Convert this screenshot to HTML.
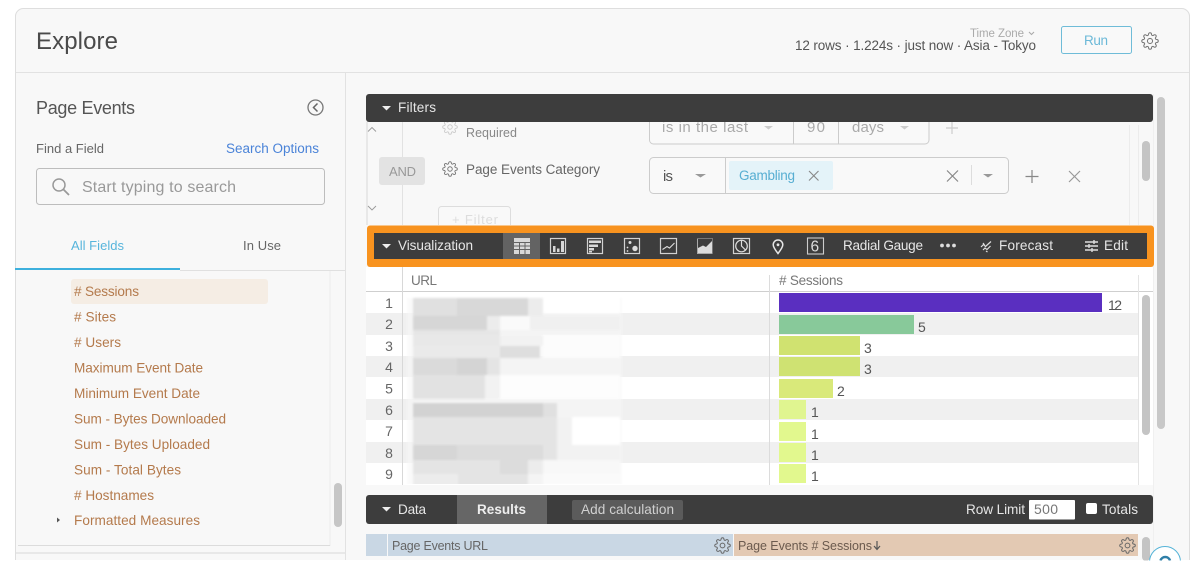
<!DOCTYPE html>
<html><head><meta charset="utf-8"><title>Explore</title>
<style>
html,body{margin:0;padding:0;background:#fff;width:1200px;height:581px;overflow:hidden}
svg{display:block;filter:blur(.35px)}
text{font-family:"Liberation Sans",sans-serif;white-space:pre}
.f text{fill:#b47a4c;font-size:13.6px}
.w{fill:#e6e6e6;font-size:13.6px}
.n{fill:#666;font-size:14px;text-anchor:middle}
.v{fill:#555;font-size:14px}
.ic{fill:none;stroke:#d2d2d2;stroke-width:1.2}
</style></head><body>
<svg width="1200" height="581" viewBox="0 0 1200 581" xmlns="http://www.w3.org/2000/svg">
<defs>
<symbol id="gear" viewBox="0 0 24 24"><circle cx="12" cy="12" r="3.4" fill="none" stroke="currentColor" stroke-width="1.400"/><path fill="none" stroke="currentColor" stroke-width="1.400" d="M19.4 15a1.65 1.65 0 0 0 .33 1.82l.06.06a2 2 0 0 1 0 2.83 2 2 0 0 1-2.83 0l-.06-.06a1.65 1.65 0 0 0-1.82-.33 1.65 1.65 0 0 0-1 1.51V21a2 2 0 0 1-2 2 2 2 0 0 1-2-2v-.09A1.65 1.65 0 0 0 9 19.4a1.65 1.65 0 0 0-1.82.33l-.06.06a2 2 0 0 1-2.83 0 2 2 0 0 1 0-2.83l.06-.06a1.65 1.65 0 0 0 .33-1.82 1.65 1.65 0 0 0-1.51-1H3a2 2 0 0 1-2-2 2 2 0 0 1 2-2h.09A1.65 1.65 0 0 0 4.6 9a1.65 1.65 0 0 0-.33-1.82l-.06-.06a2 2 0 0 1 0-2.83 2 2 0 0 1 2.83 0l.06.06a1.65 1.65 0 0 0 1.82.33H9a1.65 1.65 0 0 0 1-1.51V3a2 2 0 0 1 2-2 2 2 0 0 1 2 2v.09a1.65 1.65 0 0 0 1 1.51 1.65 1.65 0 0 0 1.82-.33l.06-.06a2 2 0 0 1 2.83 0 2 2 0 0 1 0 2.83l-.06.06a1.65 1.65 0 0 0-.33 1.82V9a1.65 1.65 0 0 0 1.51 1H21a2 2 0 0 1 2 2 2 2 0 0 1-2 2h-.09a1.65 1.65 0 0 0-1.51 1z"/></symbol>
<filter id="b" x="-5%" y="-5%" width="110%" height="110%"><feGaussianBlur stdDeviation="1"/></filter>
<clipPath id="frame"><path d="M15 560V17a8 8 0 0 1 8-8H1182a8 8 0 0 1 8 8V560z"/></clipPath>
<clipPath id="fclip"><rect x="366" y="122" width="790" height="103"/></clipPath>
<clipPath id="tclip"><rect x="366" y="292" width="772" height="192"/></clipPath>
</defs>

<!-- frame -->
<g clip-path="url(#frame)">
<rect x="15" y="8" width="1175" height="553" fill="#f8f8f8"/>
<rect x="15" y="72" width="1175" height="1" fill="#e2e2e2"/>
<rect x="345" y="73" width="1" height="488" fill="#e2e2e2"/>
<rect x="1189" y="8" width="1" height="553" fill="#dedede"/>
<rect x="15" y="8" width="1" height="553" fill="#dedede"/>
</g>
<path d="M15.5 560V17a8 8 0 0 1 8-8.500H1181.500a8 8 0 0 1 8 8.500V560" fill="none" stroke="#dedede"/>

<!-- header -->
<text x="36" y="49" font-size="24" fill="#4a4a4a" textLength="82">Explore</text>
<text x="970" y="37" font-size="11.500" fill="#aaa" textLength="54">Time Zone</text>
<path d="M1029 32l2.500 2.500 2.500-2.500" fill="none" stroke="#aaa" stroke-width="1.100"/>
<text x="795" y="50" font-size="13.500" fill="#555" textLength="241">12 rows · 1.224s · just now · Asia - Tokyo</text>
<rect x="1061.500" y="26.500" width="70" height="27" rx="2" fill="#f9f9f9" stroke="#6fbcd8"/>
<text x="1084" y="45" font-size="13.500" fill="#6cb9d8" textLength="24">Run</text>
<use href="#gear" x="1141" y="32" width="18" height="18" color="#777"/>

<!-- left panel -->
<text x="36" y="114" font-size="18" fill="#555" textLength="99">Page Events</text>
<circle cx="315.500" cy="107.500" r="7.500" fill="none" stroke="#777" stroke-width="1.300"/>
<path d="M317.500 103.500l-4 4 4 4" fill="none" stroke="#666" stroke-width="1.500"/>
<text x="36" y="153" font-size="13" fill="#666" textLength="68">Find a Field</text>
<text x="226" y="153" font-size="13.500" fill="#4a83d8" textLength="93">Search Options</text>
<rect x="36.500" y="168.500" width="288" height="36" rx="3" fill="#f8f8f8" stroke="#bdbdbd"/>
<circle cx="59" cy="185" r="6" fill="none" stroke="#999" stroke-width="1.500"/>
<path d="M63.500 189.500l5.500 5.500" stroke="#999" stroke-width="1.800"/>
<text x="82" y="192" font-size="16" fill="#999" textLength="154">Start typing to search</text>
<text x="71" y="250" font-size="13" fill="#57b5dc" textLength="53">All Fields</text>
<text x="243" y="250" font-size="13" fill="#666" textLength="38">In Use</text>
<rect x="180" y="270" width="165" height="1" fill="#e0e0e0"/>
<rect x="15" y="268" width="165" height="2" fill="#3db0dd"/>
<rect x="329.500" y="271" width="1" height="275" fill="#ececec"/>
<rect x="71" y="279" width="197" height="25" rx="3" fill="#f5ede4"/>
<g class="f">
<text x="74" y="296" textLength="65">&#35; Sessions</text>
<text x="74" y="321.500" textLength="42">&#35; Sites</text>
<text x="74" y="347" textLength="47">&#35; Users</text>
<text x="74" y="372.500" textLength="129">Maximum Event Date</text>
<text x="74" y="398" textLength="126">Minimum Event Date</text>
<text x="74" y="423.500" textLength="152">Sum - Bytes Downloaded</text>
<text x="74" y="449" textLength="136">Sum - Bytes Uploaded</text>
<text x="74" y="474.500" textLength="107">Sum - Total Bytes</text>
<text x="74" y="500" textLength="80">&#35; Hostnames</text>
<text x="74" y="525" textLength="126">Formatted Measures</text>
</g>
<path d="M57 517.500v5l3-2.500z" fill="#555"/>
<rect x="334" y="483" width="8" height="44" rx="4" fill="#c6c6c6"/>
<rect x="18" y="545" width="312" height="1" fill="#dcdcdc"/>
<rect x="16" y="552" width="329" height="2" fill="#e8e8e8"/>

<!-- filters body -->
<g clip-path="url(#fclip)">
<rect x="366.500" y="122" width="1" height="103" fill="#d8d8d8"/>
<rect x="402" y="122" width="1" height="35" fill="#e2e2e2"/>
<rect x="402" y="185" width="1" height="40" fill="#e2e2e2"/>
<path d="M368 131.500l4-4 4 4M368 206l4 4 4-4" fill="none" stroke="#999" stroke-width=".9"/>
<rect x="379" y="157" width="46" height="28" rx="3" fill="#e3e3e3"/>
<text x="389" y="176" font-size="13" fill="#999" textLength="27">AND</text>
<use href="#gear" x="442" y="119" width="16" height="16" color="#ccc"/>
<text x="466" y="137" font-size="12.500" fill="#888" textLength="51">Required</text>
<use href="#gear" x="442" y="161" width="16" height="16" color="#777"/>
<text x="466" y="174" font-size="13.500" fill="#666" textLength="134">Page Events Category</text>
<path d="M649.500 120v20a4 4 0 0 0 4 4H925a4 4 0 0 0 4-4v-20" fill="#f9f9f9" stroke="#ccc"/>
<rect x="793" y="122" width="1" height="22" fill="#ccc"/><rect x="838" y="122" width="1" height="22" fill="#ccc"/>
<text x="662" y="132" font-size="15" fill="#aaa" textLength="86">is in the last</text>
<path d="M764 126h9l-4.500 3.500z M900 126h9l-4.500 3.500z" fill="#ccc"/>
<text x="807" y="132" font-size="15" fill="#aaa" textLength="18">90</text>
<text x="852" y="132" font-size="15" fill="#aaa" textLength="32">days</text>
<path d="M952 122v12M946 128h12" stroke="#ccc" stroke-width="1.200"/>
<rect x="649.500" y="157.500" width="359" height="36" rx="4" fill="#f9f9f9" stroke="#ccc"/>
<rect x="725" y="158" width="1" height="35" fill="#ccc"/>
<text x="663" y="181" font-size="15" fill="#555" textLength="10">is</text>
<path d="M695 174h11l-5.500 3.500z" fill="#999"/>
<rect x="729" y="161" width="104" height="29" rx="2" fill="#e4f3f9"/>
<text x="739" y="180" font-size="13.500" fill="#57aed2" textLength="56">Gambling</text>
<path d="M809 171l9.500 9.500M818.500 171L809 180.500" stroke="#888" stroke-width="1.100"/>
<path d="M947 170.500l11 11M958 170.500l-11 11" stroke="#888" stroke-width="1.200"/>
<rect x="971" y="165" width="1" height="20" fill="#ddd"/>
<path d="M983 174h10l-5 3.500z" fill="#999"/>
<path d="M1032 170v13M1025.500 176.500h13" stroke="#888" stroke-width="1.200"/>
<path d="M1069 171l11 11M1080 171l-11 11" stroke="#999" stroke-width="1.200"/>
<rect x="438.500" y="206.500" width="72" height="30" rx="3" fill="#f9f9f9" stroke="#ddd"/>
<text x="452" y="224" font-size="13" fill="#ddd" textLength="46">+ Filter</text>
<rect x="1129" y="125" width="1" height="100" fill="#ececec"/>
<rect x="1138" y="125" width="1" height="100" fill="#ececec"/>
<rect x="1142" y="141" width="8" height="40" rx="4" fill="#c4c4c4"/>
</g>
<!-- outer scrollbar -->
<rect x="1153" y="94" width="1" height="467" fill="#f0f0f0"/>
<rect x="1157" y="97" width="8" height="332" rx="4" fill="#c8c8c8"/>

<!-- filters bar -->
<rect x="366" y="94" width="787" height="28" rx="3" fill="#3d3d3d"/>
<path d="M382 106h9l-4.500 4.500z" fill="#eee"/>
<text class="w" x="398" y="112" textLength="38">Filters</text>

<!-- table -->
<rect x="366" y="267" width="787" height="218" fill="#fff"/>
<rect x="366" y="291" width="787" height="1" fill="#cfcfcf"/>
<rect x="366" y="313" width="772" height="22" fill="#f0f0f0"/>
<rect x="366" y="356" width="772" height="21" fill="#f0f0f0"/>
<rect x="366" y="399" width="772" height="21" fill="#f0f0f0"/>
<rect x="366" y="442" width="772" height="21" fill="#f0f0f0"/>
<g clip-path="url(#tclip)"><g filter="url(#b)">
<rect x="407" y="298" width="215" height="187" fill="#f6f6f6" opacity=".6"/>
<rect x="413" y="298" width="44" height="18" fill="#e0e0e0"/><rect x="457" y="298" width="71" height="18" fill="#d8d8d8"/><rect x="528" y="298" width="15" height="18" fill="#ececec"/><rect x="543" y="298" width="77" height="15" fill="#fff"/>
<rect x="413" y="316" width="74" height="14" fill="#d6d6d6"/><rect x="487" y="316" width="13" height="14" fill="#ececec"/><rect x="500" y="316" width="30" height="14" fill="#fafafa"/><rect x="530" y="316" width="90" height="14" fill="#f0f0f0"/>
<rect x="413" y="335" width="87" height="11" fill="#e8e8e8"/><rect x="413" y="330" width="87" height="5" fill="#e6e6e6"/><rect x="500" y="335" width="43" height="11" fill="#f2f2f2"/><rect x="543" y="335" width="77" height="23" fill="#fcfcfc"/>
<rect x="413" y="346" width="87" height="12" fill="#eaeaea"/><rect x="500" y="346" width="40" height="12" fill="#dedede"/>
<rect x="413" y="358" width="44" height="17" fill="#dadada"/><rect x="457" y="358" width="30" height="17" fill="#d4d4d4"/><rect x="487" y="358" width="13" height="17" fill="#e4e4e4"/><rect x="500" y="358" width="120" height="17" fill="#f4f4f4"/>
<rect x="413" y="375" width="72" height="24" fill="#e2e2e2"/><rect x="485" y="375" width="15" height="24" fill="#f2f2f2"/><rect x="500" y="375" width="120" height="24" fill="#fdfdfd"/>
<rect x="413" y="403" width="130" height="14" fill="#d2d2d2"/><rect x="543" y="403" width="14" height="14" fill="#e0e0e0"/>
<rect x="413" y="417" width="144" height="28" fill="#e4e4e4"/><rect x="557" y="417" width="15" height="28" fill="#f2f2f2"/><rect x="572" y="417" width="48" height="28" fill="#fff"/>
<rect x="413" y="445" width="44" height="15" fill="#d6d6d6"/><rect x="457" y="445" width="86" height="15" fill="#dcdcdc"/><rect x="543" y="445" width="14" height="15" fill="#e4e4e4"/><rect x="557" y="445" width="63" height="15" fill="#f2f2f2"/>
<rect x="413" y="460" width="87" height="14" fill="#e4e4e4"/><rect x="500" y="460" width="28" height="14" fill="#dcdcdc"/><rect x="528" y="460" width="15" height="14" fill="#ececec"/><rect x="543" y="460" width="77" height="14" fill="#f8f8f8"/>
<rect x="413" y="474" width="45" height="12" fill="#ececec"/><rect x="458" y="474" width="70" height="12" fill="#e4e4e4"/><rect x="528" y="474" width="15" height="12" fill="#f4f4f4"/>
</g></g>
<rect x="402" y="267" width="1" height="218" fill="#d8d8d8"/>
<rect x="769" y="275" width="1" height="210" fill="#dcdcdc"/>
<rect x="1138" y="275" width="1" height="210" fill="#e4e4e4"/>
<text x="411" y="285" font-size="13.500" fill="#777" textLength="26">URL</text>
<text x="779" y="285" font-size="13.500" fill="#777" textLength="64">&#35; Sessions</text>
<text class="n" x="389" y="308">1</text><text class="n" x="389" y="329">2</text><text class="n" x="389" y="351">3</text><text class="n" x="389" y="372">4</text><text class="n" x="389" y="393.500">5</text><text class="n" x="389" y="415">6</text><text class="n" x="389" y="436">7</text><text class="n" x="389" y="458">8</text><text class="n" x="389" y="479">9</text>
<rect x="779" y="293" width="323" height="19" fill="#5a2fc0"/>
<rect x="779" y="315" width="135" height="19" fill="#88c99a"/>
<rect x="779" y="336" width="81" height="19" fill="#d0e270"/>
<rect x="779" y="357" width="81" height="19" fill="#cfe272"/>
<rect x="779" y="379" width="54" height="19" fill="#d9e97a"/>
<rect x="779" y="400" width="27" height="19" fill="#e0f590"/>
<rect x="779" y="422" width="27" height="19" fill="#e2f88e"/>
<rect x="779" y="443" width="27" height="19" fill="#e2f88e"/>
<rect x="779" y="464" width="27" height="19" fill="#e2f88e"/>
<text class="v" x="1108" y="310" textLength="14">12</text>
<text class="v" x="918" y="332">5</text><text class="v" x="864" y="353">3</text><text class="v" x="864" y="374">3</text><text class="v" x="837" y="396">2</text>
<text class="v" x="811" y="417">1</text><text class="v" x="811" y="439">1</text><text class="v" x="811" y="460">1</text><text class="v" x="811" y="481">1</text>
<rect x="1142" y="295" width="8" height="140" rx="4" fill="#c4c4c4"/>

<!-- visualization bar -->
<rect x="367" y="225.500" width="787" height="41.500" rx="3" fill="#f8931f"/>
<rect x="374" y="233" width="773" height="26" fill="#3d3d3d"/>
<path d="M382 245h9l-4.500 4.500z" fill="#eee" transform="translate(0 -1)"/>
<text class="w" x="398" y="250" textLength="75">Visualization</text>
<rect x="503" y="233" width="37" height="26" fill="#636363"/>
<!-- table icon -->
<g>
<rect x="514" y="238" width="16" height="16" fill="#d8d8d8"/>
<path d="M514 242.500h16M514 246h16M514 249.500h16M519.500 242v12M525 242v12" stroke="#636363" stroke-width="1"/>
</g>
<!-- column -->
<g><rect class="ic" x="550.500" y="238.500" width="15" height="15"/><path d="M553 246h2.500v6H553zM557 248.500h2.500v3.500H557zM561 241h3v11h-3z" fill="#d8d8d8"/></g>
<!-- bar -->
<g><rect class="ic" x="587.500" y="238.500" width="15" height="15"/><path d="M589 240.500h12v2.500h-12zM589 244.500h9v2.500h-9zM589 248h5v2.500h-5zM589 251h3v1.500h-3z" fill="#d8d8d8"/></g>
<!-- scatter -->
<g><rect class="ic" x="624.500" y="238.500" width="15" height="15"/><circle cx="630" cy="242.500" r="1.500" fill="#ddd"/><circle cx="635" cy="248.500" r="2.700" fill="#ddd"/><circle cx="627.500" cy="247.500" r=".9" fill="#ddd"/><circle cx="627.500" cy="251" r=".9" fill="#ddd"/></g>
<!-- line -->
<g><rect class="ic" x="660.500" y="238.500" width="16" height="15"/><path d="M662.500 249.500l4.500-3 2.500 1.500 5-5" fill="none" stroke="#ddd" stroke-width="1.100"/></g>
<!-- area -->
<g><path d="M697.500 238.500v15h15" fill="none" stroke="#aaa"/><path d="M698 253v-5l5-2.500 3 1.500 6-6v12z" fill="#dcdcdc"/><path d="M697.500 238.500h15v15" fill="none" stroke="#777"/></g>
<!-- pie -->
<g><rect class="ic" x="733.500" y="238.500" width="16" height="15" stroke="#aaa"/><circle cx="741.500" cy="246" r="5.800" fill="none" stroke="#ddd" stroke-width="1.200"/><path d="M741.500 240.500v5.500l4 4" fill="none" stroke="#ddd" stroke-width="1.200"/></g>
<!-- map -->
<path d="M778 253.500c-3-3.800-4.800-6.300-4.800-8.700a4.800 4.800 0 0 1 9.600 0c0 2.400-1.800 4.900-4.800 8.700z" fill="none" stroke="#e6e6e6" stroke-width="1.500"/><circle cx="778" cy="244.800" r="1.400" fill="#e6e6e6"/>
<!-- six -->
<rect x="807.500" y="238" width="16" height="16" fill="none" stroke="#ccc" stroke-width="1.100"/>
<text x="810.500" y="251.500" font-size="15.500" fill="#ddd" textLength="9">6</text>
<text class="w" x="843" y="250" textLength="80">Radial Gauge</text>
<circle cx="942" cy="245.500" r="1.900" fill="#ddd"/><circle cx="948" cy="245.500" r="1.900" fill="#ddd"/><circle cx="954" cy="245.500" r="1.900" fill="#ddd"/>
<path d="M981 247l2.500-2.500 2 2 5.500-5M983 250l2-2 2 1.500 3.500-3.500M983 243l1.500 2M986 251l1.500 1" fill="none" stroke="#ddd" stroke-width="1.200"/>
<text class="w" x="999" y="250" textLength="54">Forecast</text>
<path d="M1085 242h13M1085 246h13M1085 250h13M1094 240v4M1089 244v4M1092 248v4" stroke="#ddd" stroke-width="1.400"/>
<text class="w" x="1104" y="250" textLength="24">Edit</text>

<!-- data bar -->
<rect x="366" y="495" width="787" height="29" rx="3" fill="#3d3d3d"/>
<path d="M382 507h9l-4.500 4.500z" fill="#eee"/>
<text class="w" x="398" y="514" textLength="28">Data</text>
<rect x="457" y="495" width="90" height="29" fill="#666"/>
<text x="477" y="514" font-size="13.500" font-weight="bold" fill="#eee" textLength="49">Results</text>
<rect x="572" y="500" width="111" height="20" rx="2" fill="#5b5b5b"/>
<text x="581" y="514" font-size="13.600" fill="#d0d0d0" textLength="93">Add calculation</text>
<text class="w" x="966" y="514" textLength="59">Row Limit</text>
<rect x="1029" y="500" width="46" height="19.500" rx="1" fill="#fff"/>
<text x="1034" y="514" font-size="14" fill="#777" textLength="24">500</text>
<rect x="1086" y="503" width="11" height="11" rx="2" fill="#fff"/>
<text class="w" x="1102" y="514" textLength="36">Totals</text>

<!-- results header -->
<rect x="366" y="534" width="21" height="22" fill="#c9d7e4"/>
<rect x="388" y="534" width="345" height="22" fill="#c9d7e4"/>
<rect x="734" y="534" width="404" height="22" fill="#e3c9b3"/>
<text x="392" y="550" font-size="12.500" fill="#666" textLength="96">Page Events URL</text>
<use href="#gear" x="714" y="537" width="17" height="17" color="#666"/>
<text x="738" y="550" font-size="12.500" fill="#6b5a4e" textLength="134">Page Events &#35; Sessions</text>
<path d="M877 541v8M874 546l3 3.500 3-3.500" fill="none" stroke="#555" stroke-width="1.200"/>
<use href="#gear" x="1119" y="537" width="17" height="17" color="#666"/>
<rect x="1142" y="537" width="8" height="24" rx="4" fill="#c4c4c4"/>
<circle cx="1165" cy="562" r="15.500" fill="#fff" stroke="#56b4d8"/>
<path d="M1160.500 560.500a5 5 0 0 1 9.500 0" fill="none" stroke="#2f7fa8" stroke-width="2.500"/>
<rect x="0" y="560.500" width="1200" height="21" fill="#fff"/>
</svg>
</body></html>
